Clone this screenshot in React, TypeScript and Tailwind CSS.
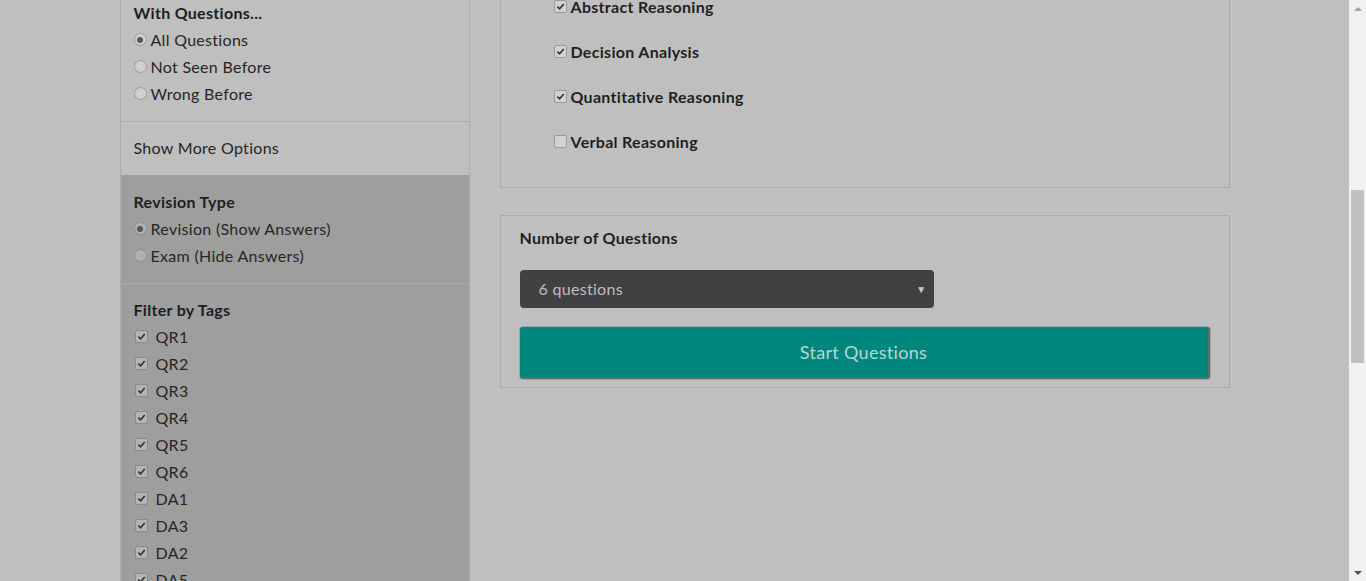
import type { ReactNode } from "react";

const tags = ["QR1", "QR2", "QR3", "QR4", "QR5", "QR6", "DA1", "DA3", "DA2", "DA5"];

const subjects = [
  { label: "Abstract Reasoning", checked: true },
  { label: "Decision Analysis", checked: true },
  { label: "Quantitative Reasoning", checked: true },
  { label: "Verbal Reasoning", checked: false },
];

function Check({ checked, dark }: { checked: boolean; dark?: boolean }) {
  return (
    <span
      className={`flex h-[13px] w-[13px] shrink-0 items-center justify-center rounded-[2px] border ${
        dark ? "border-[#8a8a8a] bg-[#b4b4b4]" : "border-[#9a9a9a] bg-[#d2d2d2]"
      }`}
    >
      {checked && (
        <svg viewBox="0 0 10 10" className="h-[9px] w-[9px]">
          <path d="M1.5 5.2 L4 7.6 L8.6 2.2" fill="none" stroke="#333" strokeWidth="1.8" />
        </svg>
      )}
    </span>
  );
}

function Radio({ checked, dark }: { checked: boolean; dark?: boolean }) {
  return (
    <span
      className={`flex h-[13px] w-[13px] shrink-0 items-center justify-center rounded-full border ${
        dark ? "border-[#8e8e8e] bg-[#b2b2b2]" : "border-[#9a9a9a] bg-[#d0d0d0]"
      }`}
    >
      {checked && <span className="h-[6px] w-[6px] rounded-full bg-[#555]" />}
    </span>
  );
}

function Section({
  children,
  dark,
  divider = true,
  className = "",
}: {
  children: ReactNode;
  dark?: boolean;
  divider?: boolean;
  className?: string;
}) {
  return (
    <div
      className={`px-[13px] ${dark ? "bg-[#9e9e9e]" : "bg-[#bfbfbf]"} ${
        divider ? (dark ? "border-b border-[#aaaaaa]" : "border-b border-[#acacac]") : ""
      } ${className}`}
    >
      {children}
    </div>
  );
}

export default function App() {
  return (
    <div
      className="flex h-[581px] w-[1366px] overflow-hidden bg-[#bfbfbf] text-[16px] tracking-[0.3px] text-[#262626]"
      style={{ fontFamily: "Lato, 'Open Sans', sans-serif" }}
    >
      <div className="flex w-[1349px] justify-center">
        <div className="flex w-[1110px] gap-[30px]">
          {/* sidebar */}
          <aside className="-mt-[14px] w-[350px] shrink-0 self-start border-x border-[#acacac]">
            <Section className="pb-[14px] pt-[13px]">
              <div className="h-[27px] font-bold leading-[27px] text-[#1e1e1e]">With Questions...</div>
              {["All Questions", "Not Seen Before", "Wrong Before"].map((t, i) => (
                <div key={t} className="flex h-[27px] items-center gap-[4px]">
                  <Radio checked={i === 0} />
                  <span className="leading-[27px]">{t}</span>
                </div>
              ))}
            </Section>
            <Section divider={false} className="pb-[14px] pt-[12px]">
              <div className="h-[27px] leading-[27px]">Show More Options</div>
            </Section>
            <Section dark className="pb-[14px] pt-[13px]">
              <div className="h-[27px] font-bold leading-[27px] text-[#1e1e1e]">Revision Type</div>
              {["Revision (Show Answers)", "Exam (Hide Answers)"].map((t, i) => (
                <div key={t} className="flex h-[27px] items-center gap-[4px]">
                  <Radio checked={i === 0} dark />
                  <span className="leading-[27px]">{t}</span>
                </div>
              ))}
            </Section>
            <Section dark divider={false} className="pb-[13px] pt-[12px]">
              <div className="h-[27px] font-bold leading-[27px] text-[#1e1e1e]">Filter by Tags</div>
              {tags.map((t) => (
                <div key={t} className="flex h-[27px] items-center gap-[8px] pl-px">
                  <Check checked dark />
                  <span className="leading-[27px]">{t}</span>
                </div>
              ))}
            </Section>
          </aside>

          {/* main */}
          <main className="flex w-[730px] flex-col gap-[27px]">
            <div className="-mt-[8px] border border-[#ababab] pb-[32px] pl-[53px]">
              <div className="flex flex-col gap-[18px]">
                {subjects.map((s) => (
                  <div key={s.label} className="flex h-[27px] items-center gap-[4px]">
                    <Check checked={s.checked} />
                    <span className="font-bold leading-[27px] text-[#1f1f1f]">{s.label}</span>
                  </div>
                ))}
              </div>
            </div>

            <div className="border border-[#ababab] px-[19px] pb-[8px] pt-[8px]">
              <div className="h-[27px] font-bold leading-[27px] text-[#1f1f1f]">Number of Questions</div>
              <div className="mt-[19px] flex h-[38px] w-[414px] items-center justify-between rounded-[4px] bg-[#414143] pl-[19px] pr-[7px] text-[#bdbdbd]">
                <span>6 questions</span>
                <span className="text-[10px] text-[#c8c8c8]">▼</span>
              </div>
              <button className="mt-[19px] flex h-[52px] w-[690px] items-center justify-center rounded-[3px] border-b-[2px] border-r-[2px] border-[#5f6a69] bg-[#00877d] text-[18px] tracking-[0.3px] text-[#b6d6d2] shadow-[0_0_0_1px_#a0a6a5]">
                Start Questions
              </button>
            </div>
          </main>
        </div>
      </div>

      {/* scrollbar */}
      <div className="flex w-[17px] shrink-0 flex-col items-center bg-[#f1f1f1]">
        <div className="flex h-[17px] items-center justify-center">
          <svg viewBox="0 0 8 4" className="h-[4px] w-[8px]">
            <path d="M0 4 L4 0 L8 4 Z" fill="#a3a3a3" />
          </svg>
        </div>
        <div className="mt-[173px] h-[173px] w-[13px] bg-[#c1c1c1]" />
        <div className="flex-1" />
        <div className="flex h-[17px] items-center justify-center">
          <svg viewBox="0 0 8 4" className="h-[4px] w-[8px]">
            <path d="M0 0 L8 0 L4 4 Z" fill="#505050" />
          </svg>
        </div>
      </div>
    </div>
  );
}
